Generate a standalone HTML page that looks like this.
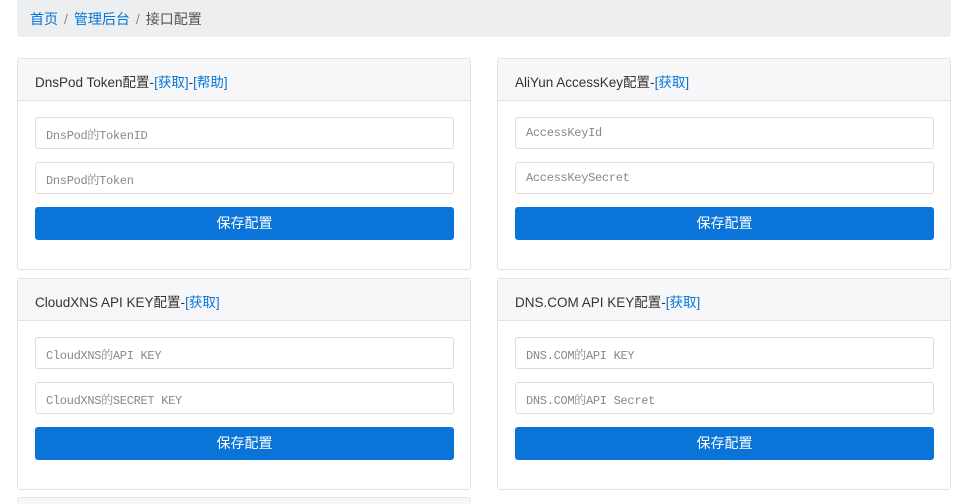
<!DOCTYPE html>
<html style="width:968px;height:504px;overflow:hidden"><head><meta charset="utf-8"><style>
*{box-sizing:border-box;margin:0;padding:0}
body{width:968px;height:504px;overflow:hidden;background:#fff;font-family:"Liberation Sans","Noto Sans CJK SC",sans-serif;font-size:14px;color:#333}
.bc{position:absolute;left:17px;top:0;width:934px;height:37px;background:#eceeef;border-radius:0 0 3px 3px;padding:9px 13px;font-size:14px;color:#555}
.bc a{color:#0275d8;text-decoration:none}
.bc .s{color:#888;margin:0 6px}
.card{position:absolute;width:454px;height:212px;border:1px solid #e3e3e3;border-radius:3px;background:#fff}
.hd{height:42px;background:#f7f7f9;border-bottom:1px solid #e3e3e3;padding:12px 17px;font-size:13.5px;color:#333}
.hd a{color:#0275d8}
.in{position:absolute;left:17px;width:419px;height:32px;border:1px solid #ddd;border-radius:3px;padding:8px 10px;font-family:"Liberation Mono","Noto Serif CJK SC",monospace;font-size:12px;color:#888;letter-spacing:-0.3px}
.btn{position:absolute;left:17px;top:148px;width:419px;height:33px;background:#0a74d8;border-radius:3px;color:#fff;text-align:center;line-height:33px;font-size:14px}
</style></head><body>
<div class="bc"><a>首页</a><span class="s">/</span><a>管理后台</a><span class="s">/</span>接口配置</div>

<div class="card" style="left:17px;top:58px"><div class="hd">DnsPod Token配置-<a>[获取]</a>-<a>[帮助]</a></div>
<div class="in" style="top:58px">DnsPod的TokenID</div><div class="in" style="top:103px">DnsPod的Token</div><div class="btn">保存配置</div></div>

<div class="card" style="left:497px;top:58px"><div class="hd">AliYun AccessKey配置-<a>[获取]</a></div>
<div class="in" style="top:58px">AccessKeyId</div><div class="in" style="top:103px">AccessKeySecret</div><div class="btn">保存配置</div></div>

<div class="card" style="left:17px;top:278px"><div class="hd">CloudXNS API KEY配置-<a>[获取]</a></div>
<div class="in" style="top:58px">CloudXNS的API KEY</div><div class="in" style="top:103px">CloudXNS的SECRET KEY</div><div class="btn">保存配置</div></div>

<div class="card" style="left:497px;top:278px"><div class="hd">DNS.COM API KEY配置-<a>[获取]</a></div>
<div class="in" style="top:58px">DNS.COM的API KEY</div><div class="in" style="top:103px">DNS.COM的API Secret</div><div class="btn">保存配置</div></div>

<div class="card" style="left:17px;top:497px;height:7px;border-bottom:none;background:#f7f7f9"></div>
</body></html>
